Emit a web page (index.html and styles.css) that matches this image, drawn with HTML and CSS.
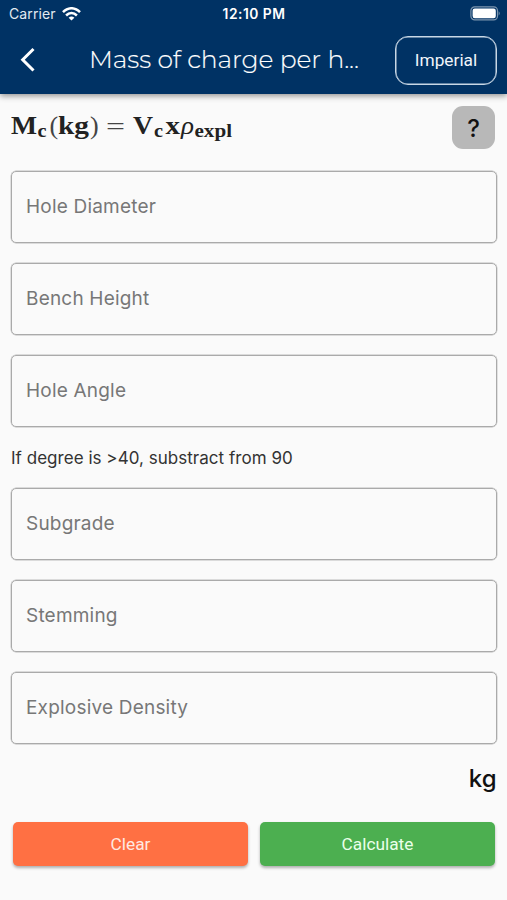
FILE: index.html
```html
<!DOCTYPE html>
<html lang="en">
<head>
<meta charset="utf-8">
<title>Mass of charge per hole</title>
<link rel="stylesheet" href="styles.css">
</head>
<body>
<header class="top">
  <div class="status">
    <div class="carrier"><span>Carrier</span>
      <svg width="19" height="14" viewBox="0 0 19 14" fill="none" stroke="#fff" stroke-width="2.5"><path d="M1 5.2C6-.1 13-.1 18 5.2"/><path d="M4.1 8.5c3.2-3.2 7.6-3.2 10.8 0"/><path d="M9.5 13.5 6.6 10.7q2.9-2.3 5.8 0z" fill="#fff" stroke="none"/></svg>
    </div>
    <span class="time">12:10 PM</span>
    <svg class="battery" width="31" height="15" viewBox="0 0 31 15"><rect x=".9" y=".9" width="26.6" height="13" rx="3.8" fill="none" stroke="#7c95ae" stroke-width="1.2"/><rect x="2.6" y="2.6" width="23.2" height="9.6" rx="2.2" fill="#fff"/><path d="M28.7 5.2q2 2.2 0 4.4z" fill="#7c95ae"/></svg>
  </div>
  <div class="bar">
    <svg class="back" width="16" height="26" viewBox="0 0 16 26" fill="none" stroke="#fff" stroke-width="3"><path d="M13.5 2 2.7 12.7l10.8 10.8"/></svg>
    <h1 class="title">Mass of charge per h...</h1>
    <button class="unit">Imperial</button>
  </div>
</header>
<main class="content">
  <div class="intro">
    <svg class="formula" width="230" height="44" viewBox="0 0 230 44">
      <g font-weight="700">
        <text x="0" y="27.5" textLength="26" lengthAdjust="spacingAndGlyphs">M</text>
        <text class="sub" x="26.5" y="31" textLength="9" lengthAdjust="spacingAndGlyphs">c</text>
        <text x="47" y="27.5" textLength="31" lengthAdjust="spacingAndGlyphs">kg</text>
        <text x="122" y="27.5" textLength="20" lengthAdjust="spacingAndGlyphs">V</text>
        <text class="sub" x="143" y="31" textLength="9" lengthAdjust="spacingAndGlyphs">c</text>
        <text x="154.5" y="27.5" textLength="14.5" lengthAdjust="spacingAndGlyphs">x</text>
        <text class="sub" x="183.5" y="31" textLength="37.5" lengthAdjust="spacingAndGlyphs">expl</text>
      </g>
      <text class="paren" x="38.5" y="27.5">(</text>
      <text class="paren" x="79" y="27.5">)</text>
      <text class="paren" x="95" y="28.5" textLength="19" lengthAdjust="spacingAndGlyphs">=</text>
      <text class="rho" x="170" y="27.5" textLength="13" lengthAdjust="spacingAndGlyphs">ρ</text>
    </svg>
    <button class="help">?</button>
  </div>
  <div class="field"><span>Hole Diameter</span></div>
  <div class="field"><span>Bench Height</span></div>
  <div class="field"><span>Hole Angle</span></div>
  <p class="note">If degree is &gt;40, substract from 90</p>
  <div class="field"><span>Subgrade</span></div>
  <div class="field"><span>Stemming</span></div>
  <div class="field"><span>Explosive Density</span></div>
  <div class="result">kg</div>
  <div class="actions">
    <button class="action clear">Clear</button>
    <button class="action calculate">Calculate</button>
  </div>
</main>
</body>
</html>
```
FILE: styles.css
```css
* { box-sizing: border-box; }
body { margin: 0; height: 900px; overflow: hidden; background: #fafafa; font-family: Inter, sans-serif; }
button { font-family: Roboto, sans-serif; padding: 0; border: 0; }
.top { height: 94px; background: #003264; color: #fff; box-shadow: 0 2px 6px rgba(0,0,0,.42); }
.status { height: 27px; padding: 0 6px 0 9px; display: grid; grid-template-columns: 1fr auto 1fr; align-items: center; }
.carrier { display: flex; align-items: center; gap: 6px; font-size: 14px; letter-spacing: .1px; color: #e3eaf1; }
.time { font-size: 13.8px; font-weight: 600; letter-spacing: .5px; margin-right: 2px; }
.battery { justify-self: end; }
.bar { height: 66px; display: flex; align-items: center; padding: 0 10px 0 20px; }
.back { flex: none; }
.title { margin: 0 0 2px 53px; width: 306px; font: 300 25px/32px Montserrat, Inter, sans-serif; letter-spacing: -.08px; white-space: nowrap; color: #fff; -webkit-text-stroke: .15px #fff; }
.unit { flex: none; width: 102px; height: 49px; border: 1px solid #c8d7e5; box-shadow: inset 0 0 0 .5px #c8d7e5; border-radius: 13px; background: none; color: #f0f5fa; font-size: 17.3px; }
.content { padding: 12px 10px 0 11px; }
.intro { height: 43px; display: flex; justify-content: space-between; padding-right: 2px; margin-bottom: 22px; }
.formula { fill: #222; font: 25px "Liberation Serif", serif; }
.formula .sub { font-size: 18px; }
.formula .paren { font-size: 26px; fill: #444; }
.formula .rho { font-style: italic; font-size: 26px; }
.help { width: 43px; height: 43px; border-radius: 11px; background: #b8b8b8; color: #111; font: 500 24px Inter, sans-serif; padding-top: 2px; }
.field { height: 72px; border: 1px solid #aaa; box-shadow: 0 0 0 .4px #bbb; border-radius: 5px; display: flex; align-items: center; padding: 0 14px 1px; margin-bottom: 20px; color: #777; font-size: 19px; letter-spacing: .2px; }
.note { margin: 0; height: 41px; line-height: 22px; color: #333; font-size: 17px; letter-spacing: .03px; }
.result { height: 30px; text-align: right; font-size: 24px; font-weight: 500; line-height: 29px; color: #111; letter-spacing: .3px; }
.actions { display: grid; grid-template-columns: 1fr 1fr; gap: 12px; padding: 0 2px; margin-top: 28px; }
.action { height: 44px; border-radius: 5px; color: #fff; font-size: 17.3px; box-shadow: 0 2px 3px rgba(0,0,0,.3); }
.clear { background: #ff7043; color: #ffe9e1; }
.calculate { background: #4caf50; color: #eaffea; }
```
